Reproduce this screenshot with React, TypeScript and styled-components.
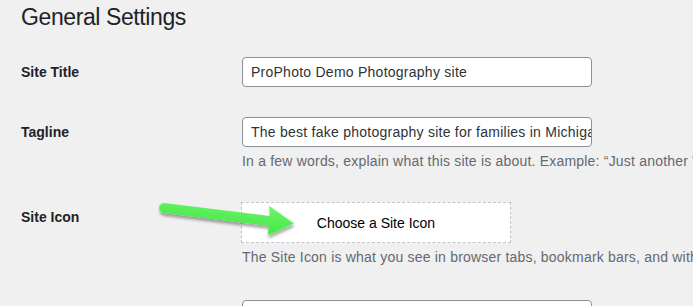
import React from "react";
import styled, { createGlobalStyle } from "styled-components";

const Global = createGlobalStyle`
  html, body {
    margin: 0;
    padding: 0;
    background: #f0f0f1;
    overflow: hidden;
  }
  body {
    font-family: "Liberation Sans", Arial, sans-serif;
    color: #1d2327;
  }
`;

const Page = styled.div`
  position: relative;
  width: 693px;
  height: 306px;
  overflow: hidden;
`;

const Wrap = styled.div`
  padding: 2px 0 0 21px;
  width: 1000px;
`;

const Title = styled.h1`
  margin: 0 0 10px;
  font-size: 23px;
  font-weight: 400;
  line-height: 30px;
  letter-spacing: -0.4px;
  color: #1d2327;
`;

const FormTable = styled.div`
  display: grid;
  grid-template-columns: 221px 1fr;
`;

const Label = styled.div`
  padding: 21px 10px 19px 0;
  font-size: 14px;
  font-weight: 700;
  line-height: 18px;
  color: #1d2327;
`;

const Field = styled.div<{ $last?: boolean }>`
  padding: 15px 0 ${(p) => (p.$last ? "17px" : "15px")};
  display: flex;
  flex-direction: column;
  align-items: flex-start;
`;

const TextInput = styled.div`
  box-sizing: border-box;
  width: 350px;
  height: 30px;
  padding: 0 8px;
  background: #fff;
  border: 1px solid #8c8f94;
  border-radius: 4px;
  font-size: 14px;
  letter-spacing: 0.25px;
  line-height: 28px;
  color: #2c3338;
  white-space: nowrap;
  overflow: hidden;
`;

const Description = styled.p`
  margin: 4px 0 0;
  font-size: 14px;
  line-height: 21px;
  letter-spacing: 0.2px;
  color: #646970;
  white-space: nowrap;
`;

const IconButton = styled.div`
  box-sizing: border-box;
  width: 270px;
  height: 41px;
  margin-left: -1px;
  display: flex;
  align-items: center;
  justify-content: center;
  background: #fff;
  border: 1px dashed #c3c4c7;
  font-size: 14px;
  color: #000;
`;

const Overlay = styled.svg`
  position: absolute;
  left: 0;
  top: 0;
  pointer-events: none;
`;

const Arrow = () => (
  <Overlay width={693} height={306} viewBox="0 0 693 306">
    <defs>
      <filter id="sh" x="-20%" y="-50%" width="140%" height="200%">
        <feDropShadow dx="1" dy="3" stdDeviation="1.8" floodColor="#000" floodOpacity="0.35" />
      </filter>
      <linearGradient id="gr" x1="0" y1="0" x2="0" y2="1">
        <stop offset="0" stopColor="#6cf56c" />
        <stop offset="1" stopColor="#45e645" />
      </linearGradient>
    </defs>
    <g transform="translate(164 208) rotate(7)" filter="url(#sh)">
      <path
        d="M0 -5 L106 -5 L104 -15 L131 -0.5 L106.5 14.5 L106 5 L0 5 A5 5 0 0 1 0 -5 Z"
        fill="url(#gr)"
        strokeLinejoin="round"
      />
    </g>
  </Overlay>
);

export default function App() {
  return (
    <Page>
      <Global />
      <Wrap>
        <Title>General Settings</Title>
        <FormTable>
          <Label>Site Title</Label>
          <Field>
            <TextInput>ProPhoto Demo Photography site</TextInput>
          </Field>
          <Label>Tagline</Label>
          <Field>
            <TextInput>The best fake photography site for families in Michigan</TextInput>
            <Description>
              In a few words, explain what this site is about. Example: “Just another WordPress site.”
            </Description>
          </Field>
          <Label>Site Icon</Label>
          <Field $last>
            <IconButton>Choose a Site Icon</IconButton>
            <Description>
              The Site Icon is what you see in browser tabs, bookmark bars, and within the WordPress mobile apps.
            </Description>
          </Field>
          <Label>WordPress Address (URL)</Label>
          <Field>
            <TextInput>https://demo.prophoto.com</TextInput>
          </Field>
        </FormTable>
      </Wrap>
      <Arrow />
    </Page>
  );
}
